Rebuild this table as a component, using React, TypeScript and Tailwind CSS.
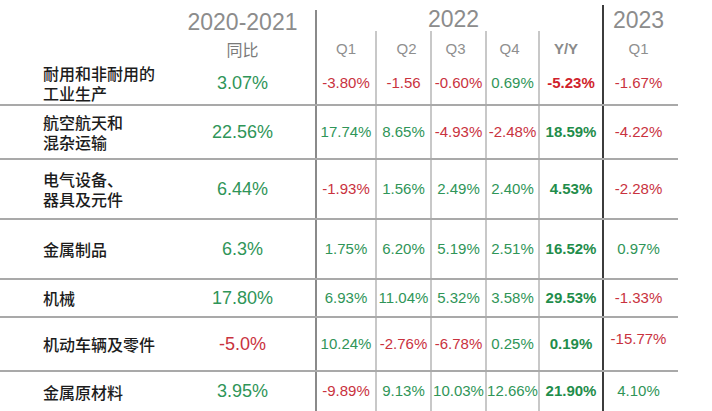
const GREEN = "text-[#2f9558]";
const RED = "text-[#c9323e]";

type Row = {
  label: string;
  ytd: string;
  q: string[];
  yy: string;
  q23: string;
  h: string;
};

const rows: Row[] = [
  { label: "耐用和非耐用的\n工业生产", ytd: "3.07%", q: ["-3.80%", "-1.56", "-0.60%", "0.69%"], yy: "-5.23%", q23: "-1.67%", h: "h-[42px]" },
  { label: "航空航天和\n混杂运输", ytd: "22.56%", q: ["17.74%", "8.65%", "-4.93%", "-2.48%"], yy: "18.59%", q23: "-4.22%", h: "h-[54px]" },
  { label: "电气设备、\n器具及元件", ytd: "6.44%", q: ["-1.93%", "1.56%", "2.49%", "2.40%"], yy: "4.53%", q23: "-2.28%", h: "h-[60px]" },
  { label: "金属制品", ytd: "6.3%", q: ["1.75%", "6.20%", "5.19%", "2.51%"], yy: "16.52%", q23: "0.97%", h: "h-[60px]" },
  { label: "机械", ytd: "17.80%", q: ["6.93%", "11.04%", "5.32%", "3.58%"], yy: "29.53%", q23: "-1.33%", h: "h-[38px]" },
  { label: "机动车辆及零件", ytd: "-5.0%", q: ["10.24%", "-2.76%", "-6.78%", "0.25%"], yy: "0.19%", q23: "-15.77%", h: "h-[54px]" },
  { label: "金属原材料", ytd: "3.95%", q: ["-9.89%", "9.13%", "10.03%", "12.66%"], yy: "21.90%", q23: "4.10%", h: "h-[41px]" },
];

const cols = "grid grid-cols-[175px_140px_60px_55px_55px_53px_64px_76px] w-[678px]";
const num = "font-['Liberation_Sans',Arial,sans-serif]";
const cjk = "font-['Noto_Sans_CJK_SC',sans-serif]";

function tone(v: string) {
  return v.startsWith("-") ? RED : GREEN;
}

export default function App() {
  return (
    <div className="w-[712px] h-[411px] bg-white overflow-hidden">
      {/* header */}
      <div className={`${cols} grid-rows-[31px_31px]`}>
        <div />
        <div className={`${num} text-[23px] leading-[23px] text-[#8c8c8c] text-center pr-[5px] pt-[11px]`}>
          2020-2021
        </div>
        <div className={`${num} col-span-5 mt-[10px] border-l-2 border-[#8a8a8a] text-[23px] leading-[18px] text-[#8c8c8c] text-center pr-[12px]`}>
          2022
        </div>
        <div className={`${num} mt-[5px] border-l-2 border-[#3c3c3c] text-[23px] leading-[23px] text-[#8c8c8c] text-center pt-[4px] pr-[5px]`}>
          2023
        </div>

        <div />
        <div className={`${cjk} text-[16px] leading-[20px] text-[#7a7a7a] text-center pr-[5px] pt-[8px]`}>同比</div>
        <div className={`${num} border-l-2 border-[#8a8a8a] text-[15px] leading-[20px] text-[#8f8f8f] text-center pt-[8px]`}>Q1</div>
        <div className={`${num} border-l-2 border-[#c8c8c8] text-[15px] leading-[20px] text-[#8f8f8f] text-center pt-[8px] pl-[6px]`}>Q2</div>
        <div className={`${num} border-l-2 border-[#c8c8c8] text-[15px] leading-[20px] text-[#8f8f8f] text-center pt-[8px] pr-[6px]`}>Q3</div>
        <div className={`${num} border-l-2 border-[#c8c8c8] text-[15px] leading-[20px] text-[#8f8f8f] text-center pt-[8px] pr-[6px]`}>Q4</div>
        <div className={`${num} border-l-2 border-[#c8c8c8] text-[15px] leading-[20px] text-[#8a8a8a] font-bold text-center pt-[8px] pr-[10px]`}>Y/Y</div>
        <div className={`${num} border-l-2 border-[#3c3c3c] text-[15px] leading-[20px] text-[#8f8f8f] text-center pt-[8px] pr-[5px]`}>Q1</div>
      </div>

      {/* body */}
      {rows.map((r, i) => (
        <div key={i} className={`${cols} ${r.h} ${i > 0 ? "border-t-2 border-[#a9a9a9]" : ""}`}>
          <div className={`${cjk} flex items-center pl-[43px] text-[16px] leading-[20px] font-medium text-[#1c1c1c]`}>
            <span className="whitespace-pre-line">{r.label}</span>
          </div>
          <div className={`${num} flex items-center justify-center pr-[5px] text-[18px] ${tone(r.ytd)}`}>{r.ytd}</div>
          {r.q.map((v, j) => (
            <div
              key={j}
              className={`${num} flex items-center justify-center whitespace-nowrap border-l-2 text-[15px] ${j === 0 ? "border-[#8a8a8a]" : "border-[#c8c8c8]"} ${tone(v)}`}
            >
              {v}
            </div>
          ))}
          <div className={`${num} flex items-center justify-center whitespace-nowrap border-l-2 border-[#c8c8c8] text-[15px] font-bold ${r.yy.startsWith("-") ? "text-[#d01f2c]" : "text-[#1f8d4b]"}`}>
            {r.yy}
          </div>
          <div className={`${num} flex items-center justify-center whitespace-nowrap border-l-2 border-[#3c3c3c] pr-[5px] text-[15px] ${tone(r.q23)} ${r.q23 === "-15.77%" ? "pb-[10px]" : ""}`}>
            {r.q23}
          </div>
        </div>
      ))}
    </div>
  );
}
